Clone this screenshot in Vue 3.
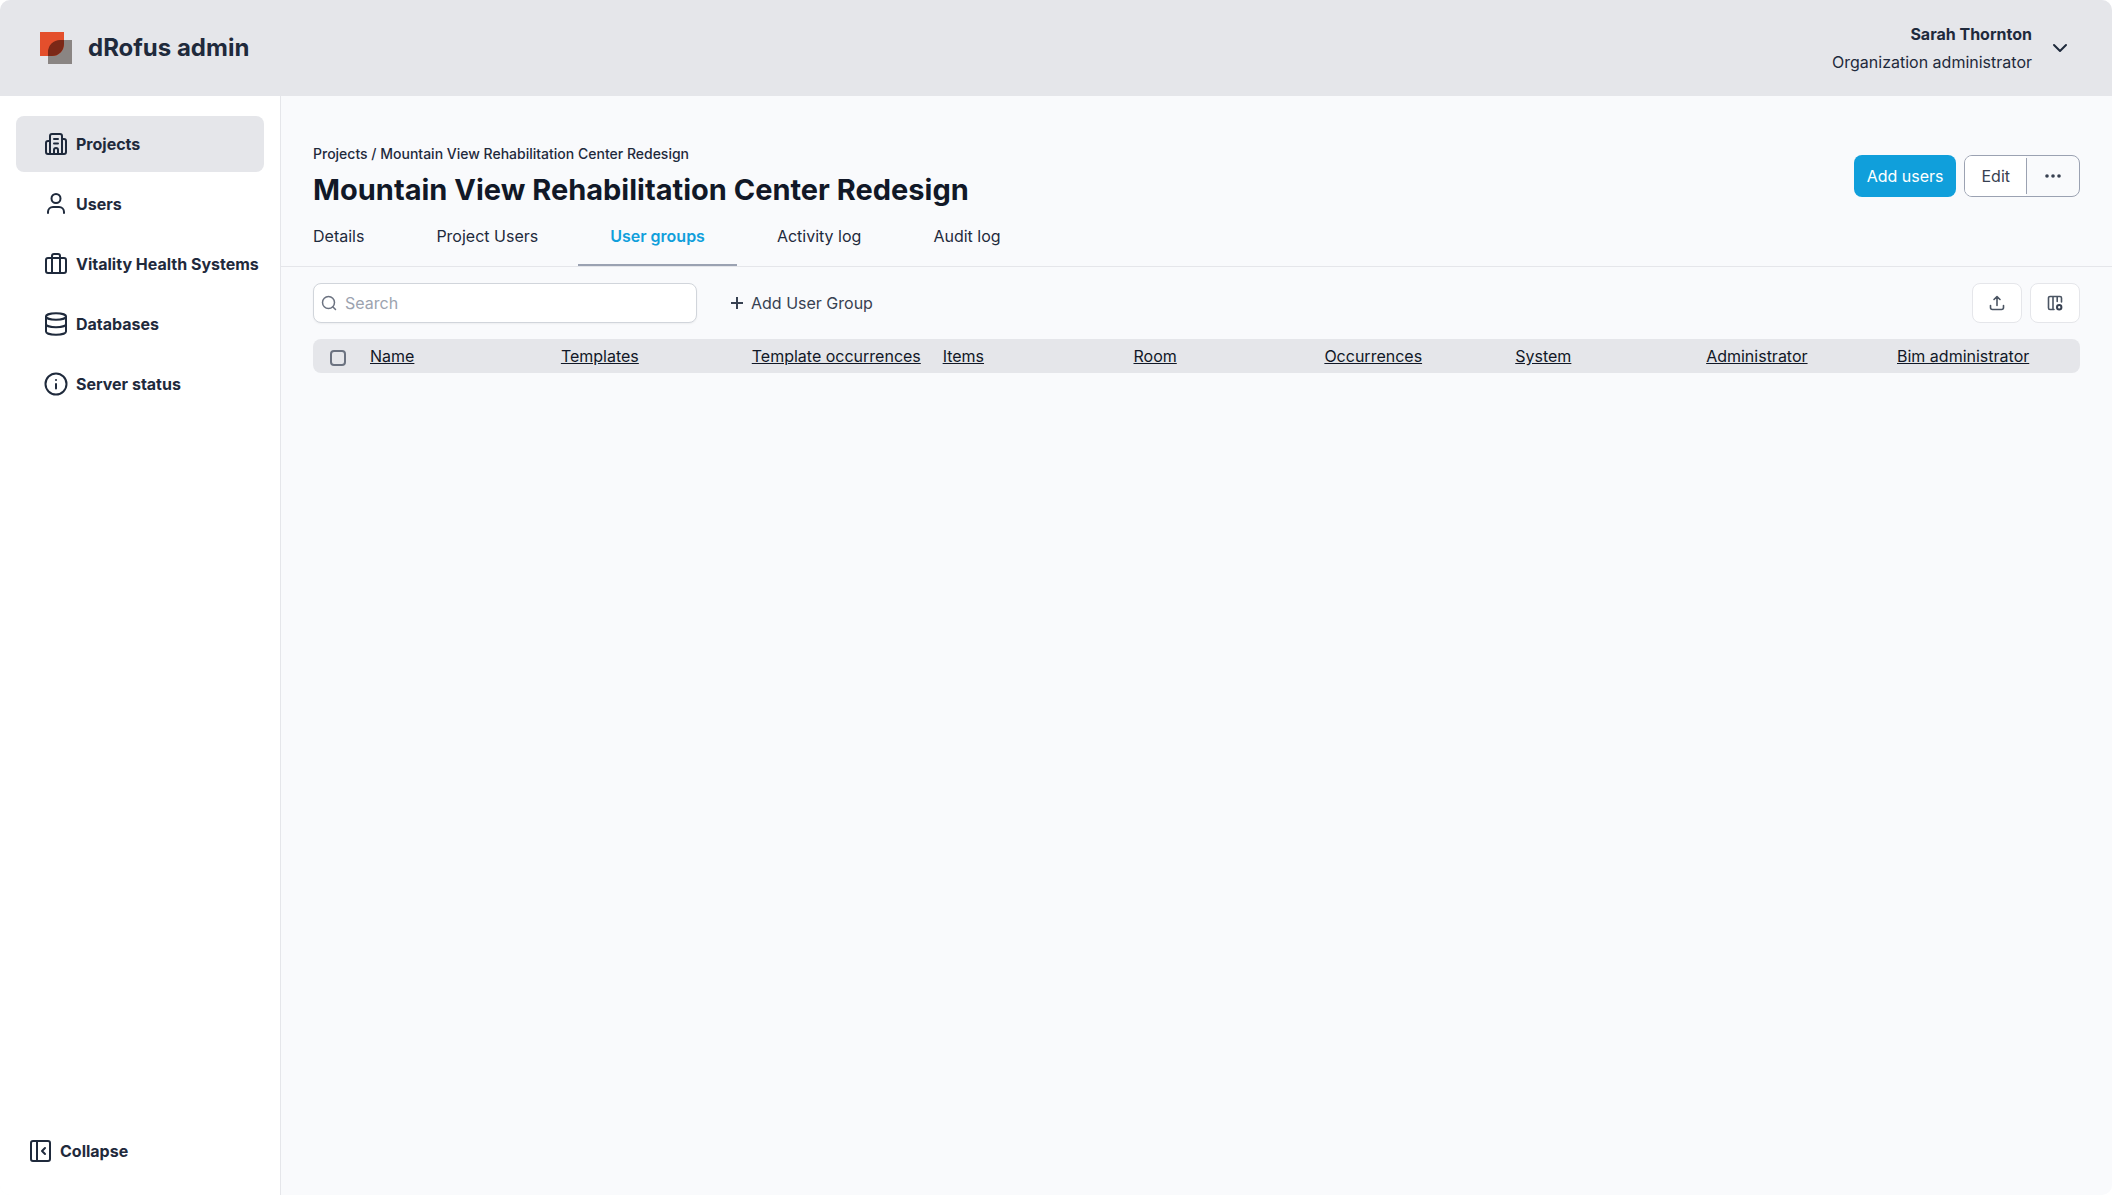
<script setup>
import { ref } from 'vue'

const navItems = [
  { label: 'Projects', icon: 'building', active: true },
  { label: 'Users', icon: 'user' },
  { label: 'Vitality Health Systems', icon: 'briefcase' },
  { label: 'Databases', icon: 'database' },
  { label: 'Server status', icon: 'info' },
]
const tabs = ['Details', 'Project Users', 'User groups', 'Activity log', 'Audit log']
const activeTab = ref('User groups')
const columns = [
  'Name',
  'Templates',
  'Template occurrences',
  'Items',
  'Room',
  'Occurrences',
  'System',
  'Administrator',
  'Bim administrator',
]
const search = ref('')
const allSelected = ref(false)
</script>

<template>
  <div class="app">
    <header class="topbar">
      <a class="brand" href="#">
        <svg class="logo" viewBox="0 0 32 32" aria-hidden="true">
          <path fill="#e44f2c" d="M0 0h24v24H0z" />
          <path fill="#8a8583" d="M24 8h8v24H8v-8h4a12 12 0 0 0 12-12z" />
          <path fill="#7b2817" d="M8 24v-4A12 12 0 0 1 20 8h4v4a12 12 0 0 1-12 12z" />
        </svg>
        <span>dRofus admin</span>
      </a>
      <button class="account" type="button">
        <span class="account-text">
          <strong>Sarah Thornton</strong>
          <span>Organization administrator</span>
        </span>
        <svg class="chevron" viewBox="0 0 24 24" aria-hidden="true"><path d="m6 9 6 6 6-6" /></svg>
      </button>
    </header>

    <div class="body">
      <aside class="sidebar">
        <nav class="nav">
          <a v-for="item in navItems" :key="item.label" href="#" class="nav-item" :class="{ active: item.active }">
            <svg class="icon" viewBox="0 0 24 24" aria-hidden="true">
              <g v-if="item.icon === 'building'">
                <path d="M6 22V4a2 2 0 0 1 2-2h8a2 2 0 0 1 2 2v18" />
                <path d="M6 9H4a2 2 0 0 0-2 2v9a2 2 0 0 0 2 2h16a2 2 0 0 0 2-2V9a2 2 0 0 0-2-2h-2" />
                <path d="M10 7h4M10 11.500h4M10 22v-4a2 2 0 0 1 4 0v4" />
              </g>
              <g v-else-if="item.icon === 'user'">
                <circle cx="12" cy="6.500" r="4.500" />
                <path d="M4 21v-1a5 5 0 0 1 5-5h6a5 5 0 0 1 5 5v1" />
              </g>
              <g v-else-if="item.icon === 'briefcase'">
                <rect x="2" y="6" width="20" height="15" rx="2" />
                <path d="M16 21V4a2 2 0 0 0-2-2h-4a2 2 0 0 0-2 2v17" />
              </g>
              <g v-else-if="item.icon === 'database'">
                <ellipse cx="12" cy="4.500" rx="10" ry="3.200" />
                <path d="M2 4.500v15c0 1.800 4.500 3.200 10 3.200s10-1.400 10-3.200v-15" />
                <path d="M2 12c0 1.800 4.500 3.200 10 3.200s10-1.400 10-3.200" />
              </g>
              <g v-else>
                <circle cx="12" cy="12" r="10.500" />
                <path d="M12 16.500v-4.500M12 8h.01" />
              </g>
            </svg>
            <span>{{ item.label }}</span>
          </a>
        </nav>
        <button class="collapse" type="button">
          <svg class="icon" viewBox="0 0 24 24" aria-hidden="true">
            <rect x="3" y="2" width="19" height="20" rx="2" />
            <path d="M9 2v20M17 9l-3 3 3 3" />
          </svg>
          <span>Collapse</span>
        </button>
      </aside>

      <main class="main">
        <div class="page-head">
          <div>
            <div class="breadcrumb"><a href="#">Projects</a> / <a href="#">Mountain View Rehabilitation Center Redesign</a></div>
            <h1>Mountain View Rehabilitation Center Redesign</h1>
          </div>
          <div class="actions">
            <button class="primary" type="button">Add users</button>
            <div class="split">
              <button class="edit" type="button">Edit</button>
              <button class="more" type="button" aria-label="More actions">
                <svg viewBox="0 0 16 16" aria-hidden="true">
                  <circle cx="2" cy="8" r="1.800" /><circle cx="8" cy="8" r="1.800" /><circle cx="14" cy="8" r="1.800" />
                </svg>
              </button>
            </div>
          </div>
        </div>

        <nav class="tabs">
          <a
            v-for="tab in tabs"
            :key="tab"
            href="#"
            class="tab"
            :class="{ selected: tab === activeTab }"
            @click.prevent="activeTab = tab"
          >{{ tab }}</a>
        </nav>

        <div class="content">
          <div class="toolbar">
            <label class="search">
              <svg viewBox="0 0 16 16" aria-hidden="true"><circle cx="7.500" cy="7.500" r="6" /><path d="m12 12 2.500 2.500" /></svg>
              <input v-model="search" type="text" placeholder="Search" aria-label="Search" />
            </label>
            <button class="add-group" type="button">
              <svg viewBox="0 0 12 12" aria-hidden="true"><path d="M6 0v12M0 6h12" /></svg>
              <span>Add User Group</span>
            </button>
            <div class="tools">
              <button type="button" aria-label="Export">
                <svg viewBox="0 0 16 16" aria-hidden="true"><path d="M8 10.500V2M5 4.500l3-3 3 3M1.500 10.500v2a2 2 0 0 0 2 2h9a2 2 0 0 0 2-2v-2" /></svg>
              </button>
              <button type="button" aria-label="Configure columns">
                <svg viewBox="0 0 16 16" aria-hidden="true">
                  <path d="M7 14.500H3A1.500 1.500 0 0 1 1.500 13V3A1.500 1.500 0 0 1 3 1.500h10A1.500 1.500 0 0 1 14.500 3v4M6 1.500v13M10.200 1.500V6.500" />
                  <circle class="cog" cx="12.200" cy="12.200" r="2.200" />
                </svg>
              </button>
            </div>
          </div>

          <table class="grid">
            <thead>
              <tr>
                <th class="check" scope="col"><input v-model="allSelected" type="checkbox" aria-label="Select all" /></th>
                <th v-for="column in columns" :key="column" scope="col"><a href="#">{{ column }}</a></th>
              </tr>
            </thead>
          </table>
        </div>
      </main>
    </div>
  </div>
</template>

<style>
body {
  background: #ffffff;
}
</style>

<style scoped>
.app,
.app * {
  box-sizing: border-box;
}

.app {
  display: flex;
  flex-direction: column;
  min-height: 100vh;
  overflow: hidden;
  border-radius: 10px;
  background: #f9fafc;
  color: #1f2a3c;
  font: 400 16px/24px Inter, sans-serif;
}

a {
  color: inherit;
  text-decoration: none;
}

button {
  padding: 0;
  border: 0;
  background: none;
  color: inherit;
  font: inherit;
  cursor: pointer;
}

svg {
  flex: none;
  fill: none;
  stroke: currentColor;
  stroke-width: 2;
  stroke-linecap: round;
  stroke-linejoin: round;
}

.topbar {
  display: flex;
  align-items: center;
  justify-content: space-between;
  height: 96px;
  padding: 0 40px;
  background: #e5e6ea;
}

.brand {
  display: flex;
  align-items: center;
  gap: 16px;
  font-size: 24px;
  line-height: 32px;
  font-weight: 700;
}

.logo {
  width: 32px;
  height: 32px;
  stroke: none;
}

.account {
  display: flex;
  align-items: center;
  gap: 16px;
}

.account-text {
  display: flex;
  flex-direction: column;
  gap: 4px;
  text-align: right;
}

.account-text strong {
  font-weight: 700;
}

.chevron {
  width: 24px;
  height: 24px;
}

.body {
  display: flex;
  flex: 1;
}

.sidebar {
  display: flex;
  flex: none;
  flex-direction: column;
  justify-content: space-between;
  width: 281px;
  border-right: 1px solid #e5e6ea;
  background: #ffffff;
  font-weight: 700;
}

.nav {
  display: flex;
  flex-direction: column;
  gap: 4px;
  padding: 20px 16px;
}

.nav-item {
  display: flex;
  align-items: center;
  gap: 8px;
  height: 56px;
  padding-left: 28px;
  border-radius: 8px;
  white-space: nowrap;
}

.nav-item.active {
  background: #e5e6ea;
}

.icon {
  width: 24px;
  height: 24px;
}

.collapse {
  display: flex;
  align-items: center;
  gap: 8px;
  padding: 32px 28px;
}

.main {
  flex: 1;
  min-width: 0;
}

.page-head {
  display: flex;
  align-items: center;
  justify-content: space-between;
  padding: 48px 32px 0;
}

.breadcrumb {
  font-size: 14px;
  line-height: 20px;
  font-weight: 500;
}

h1 {
  margin: 8px 0 0;
  color: #111827;
  font-size: 29px;
  line-height: 36px;
  font-weight: 700;
}

.actions {
  display: flex;
  gap: 8px;
}

.primary {
  height: 42px;
  padding: 0 13px;
  border-radius: 8px;
  background: #109fdb;
  color: #ffffff;
}

.split {
  display: flex;
  align-items: center;
  height: 42px;
  overflow: hidden;
  border: 1px solid #9ba2b2;
  border-radius: 8px;
  color: #374151;
}

.edit {
  height: 40px;
  padding: 0 16px;
  background: #ffffff;
}

.more {
  display: flex;
  align-items: center;
  height: 36px;
  padding: 0 18px;
  border-left: 1px solid #9ba2b2;
}

.more svg {
  width: 16px;
  height: 16px;
  fill: currentColor;
  stroke: none;
}

.tabs {
  display: flex;
  gap: 8px;
  border-bottom: 1px solid #e5e6ea;
}

.tab {
  padding: 16px 32px;
  border-bottom: 2px solid transparent;
}

.tab.selected {
  border-color: #9ba2b2;
  color: #109fdb;
  font-weight: 600;
}

.content {
  padding: 16px 32px;
}

.toolbar {
  display: flex;
  align-items: center;
  margin-bottom: 16px;
}

.search {
  display: flex;
  align-items: center;
  gap: 8px;
  width: 384px;
  height: 40px;
  padding: 0 7px;
  border: 1px solid #d1d5db;
  border-radius: 8px;
  background: #ffffff;
  box-shadow: 0 1px 2px rgba(0, 0, 0, 0.05);
  color: #6b7280;
}

.search svg {
  width: 16px;
  height: 16px;
  stroke-width: 1.5;
}

.search input {
  flex: 1;
  min-width: 0;
  padding: 0;
  border: 0;
  outline: 0;
  background: none;
  color: #1f2a3c;
  font: inherit;
}

.search input::placeholder {
  color: #9ca3af;
}

.add-group {
  display: flex;
  align-items: center;
  gap: 8px;
  margin-left: 34px;
  color: #374151;
}

.add-group svg {
  width: 12px;
  height: 12px;
  stroke-linecap: butt;
}

.tools {
  display: flex;
  gap: 8px;
  margin-left: auto;
}

.tools button {
  display: flex;
  align-items: center;
  justify-content: center;
  width: 50px;
  height: 40px;
  border: 1px solid #e5e6ea;
  border-radius: 8px;
  background: #ffffff;
  color: #4b5563;
}

.tools svg {
  width: 16px;
  height: 16px;
  stroke-width: 1.6;
}

.tools .cog {
  stroke: #374151;
  stroke-width: 2;
}

.grid {
  width: 100%;
  border-spacing: 0;
  table-layout: fixed;
}

.grid th {
  height: 34px;
  padding: 0 0 0 8px;
  background: #e5e6ea;
  color: #111827;
  font-weight: 400;
  text-align: left;
  white-space: nowrap;
}

.grid th.check {
  width: 49px;
  padding-left: 17px;
  border-radius: 8px 0 0 8px;
}

.grid th:last-child {
  border-radius: 0 8px 8px 0;
}

.grid a {
  text-decoration: underline;
}

.grid input {
  display: block;
  width: 16px;
  height: 16px;
  margin: 4px 0 0;
  appearance: none;
  border: 2px solid #6b7280;
  border-radius: 4px;
}

.grid input:checked {
  background: #109fdb;
}
</style>
